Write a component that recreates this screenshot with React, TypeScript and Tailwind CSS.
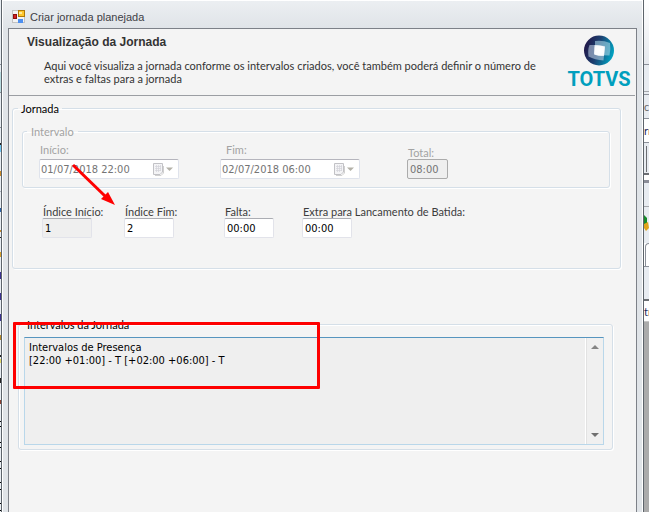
import React from 'react'

const fieldText = "font-['DejaVu_Sans_Condensed','Liberation_Sans',sans-serif] text-[11px] leading-[13px]"
const fieldset = 'min-w-0 rounded-[3px] border border-[#d5dfe8] shadow-[inset_1px_1px_0_#fff,1px_1px_0_#fff]'

// Fragments of the window behind that show past the left border: [top, height, colour]
const leftMarks: [number, number, string][] = [
  [64, 1, '#8b9099'],
  [72, 20, '#b9dce0'],
  [92, 1, '#8b9099'],
  [127, 1, '#8b9099'],
  [143, 2, '#222222'],
  [145, 7, '#6fc6f2'],
  [171, 5, '#c98a28'],
  [191, 1, '#aab0bb'],
  [208, 4, '#2a62a8'],
  [230, 2, '#c98a28'],
  [237, 1, '#222222'],
  [252, 5, '#d6a02c'],
  [272, 7, '#3b3191'],
  [293, 7, '#3b3191'],
  [314, 7, '#3b3191'],
  [335, 5, '#b58a2c'],
  [355, 2, '#222222'],
  [359, 4, '#e3d96a'],
  [378, 5, '#222222'],
  [400, 4, '#8a4030'],
  [421, 1, '#000000'],
  [426, 1, '#000000'],
  [442, 1, '#000000'],
  [447, 1, '#000000'],
  [461, 1, '#000000'],
  [468, 1, '#000000'],
  [482, 1, '#000000'],
  [489, 1, '#000000'],
  [503, 1, '#000000'],
  [510, 1, '#000000']
]

function AppIcon() {
  return (
    <svg width="14" height="14" viewBox="0 0 14 14" className="shrink-0" aria-hidden="true">
      <rect x="0.5" y="0.5" width="12" height="12" fill="#f3f3f3" stroke="#c2c2c2" />
      <rect x="6.5" y="0.5" width="6" height="6" fill="#ffc72c" stroke="#b07a08" />
      <rect x="7" y="2" width="3" height="2" fill="#ffe99a" />
      <rect x="1.5" y="4.5" width="3" height="4" fill="#d32020" stroke="#8c1010" />
      <rect x="6" y="9" width="5" height="4" fill="#4c8ff0" />
    </svg>
  )
}

function TotvsLogo() {
  return (
    <div className="flex w-[62px] shrink-0 flex-col items-center">
      <svg width="32" height="31" viewBox="0 0 32 31" aria-hidden="true">
        <defs>
          <linearGradient id="ball" x1="0" y1="0.3" x2="1" y2="0.6">
            <stop offset="0" stopColor="#211546" />
            <stop offset="0.45" stopColor="#1b3f70" />
            <stop offset="1" stopColor="#00a6c4" />
          </linearGradient>
          <radialGradient id="glow" cx="0.5" cy="0.5" r="0.8">
            <stop offset="0" stopColor="#fff" />
            <stop offset="0.6" stopColor="#fff" stopOpacity="0.95" />
            <stop offset="1" stopColor="#dcebf5" stopOpacity="0.7" />
          </radialGradient>
        </defs>
        <circle cx="16" cy="15.5" r="15" fill="url(#ball)" />
        <path d="M12 6Q20 5 27 8Q28 14 26.500 20.500L12 20Z" fill="#a9d3e4" fillOpacity="0.6" />
        <path d="M6.500 10Q14 9.500 22 11L20.500 25.500Q12 25 5.500 21.500Q4.500 15 6.500 10Z" fill="#b9c9de" fillOpacity="0.6" />
        <path d="M11.500 10Q17 10 22 11.500L21 21Q15 21 11 19.500Z" fill="url(#glow)" />
      </svg>
      <span className="font-[Roboto,sans-serif] text-[20px] leading-[26px] font-bold text-[#009fbe]">TOTVS</span>
    </div>
  )
}

function CalendarIcon() {
  return (
    <svg width="22" height="13" viewBox="0 0 22 13" className="shrink-0" aria-hidden="true">
      <path d="M1.5 0.5H10.5V9L8 11.5H1.5Z" fill="#f4f4f6" stroke="#c2c2c6" />
      <path d="M3 3.5H9M3 5.5H9M3 7.5H9M4.5 2V9M6.5 2V9M8.5 2V8" stroke="#d2d2da" strokeWidth="0.7" />
      <path d="M11.5 3V10L9 12.5H3" fill="none" stroke="#d0d0d0" />
      <path d="M14 4.5H21L17.5 8Z" fill="#b3b1a8" />
    </svg>
  )
}

function DateField({ id, label, value, indent }: { id: string; label: string; value: string; indent?: boolean }) {
  return (
    <div className="flex flex-col gap-[3px]">
      <label htmlFor={id} className={`text-[#a3a3a3] ${indent ? 'pl-[6px]' : 'pl-px'}`}>{label}</label>
      <div className="flex h-5 w-[140px] items-center rounded-[2px] border border-[#dfe3ec] border-t-[#b5b5bd] bg-white pr-1">
        <input id={id} disabled defaultValue={value} className={`${fieldText} min-w-0 flex-1 bg-transparent pl-px text-[#747474]`} />
        <CalendarIcon />
      </div>
    </div>
  )
}

function TextField({ id, label, value, readOnly }: { id: string; label: string; value: string; readOnly?: boolean }) {
  return (
    <div className="flex w-[50px] flex-col">
      <label htmlFor={id} className="pl-px whitespace-nowrap text-[#3c3c3c]">{label}</label>
      <input
        id={id}
        defaultValue={value}
        readOnly={readOnly}
        className={`${fieldText} h-5 w-full rounded-[2px] border border-[#e2e3ea] border-t-[#abadb3] px-[2px] text-black ${readOnly ? 'bg-[#efefef]' : 'bg-white'}`}
      />
    </div>
  )
}

// Slice of the window behind, right of the dialog
function BackgroundEdge() {
  return (
    <div className="flex w-[5px] shrink-0 flex-col overflow-hidden bg-[#ababab] text-[#1f2a5c]" aria-hidden="true">
      <div className="h-[65px] border-b border-[#8b9099] bg-gradient-to-b from-white to-[#e6e9ee]" />
      <div className="h-[27px] border-b border-[#a5a8ad] bg-[#e8ecf1]" />
      <div className="h-[3px] border-b border-[#8b9099] bg-[#e8ecf1]" />
      <div className="h-6 border-b border-[#8b9099] bg-[#e8ecf1] pt-[5px] text-[#6b6b6b]">co</div>
      <div className="h-6 border-b border-[#8b9099] bg-white pt-[5px]">rr</div>
      <div className="h-8 border-b-2 border-[#6b6e73] bg-[#e8ecf1] pt-[3px] pl-[2px]"><div className="h-[26px] w-px bg-[#6b6e73]" /></div>
      <div className="h-[8px] border-b-3 border-[#8b8d98] bg-white" />
      <div className="h-6 border-b border-[#a5a8ad] bg-[#e8ecf1]" />
      <div className="h-9 bg-[#e8ecf1] pt-[8px]">
        <svg width="5" height="16"><path d="M0 0L3 3V9H0Z" fill="#178a2b" /><path d="M0 9L4 7L5 13L2 16L0 13Z" fill="#e0a41c" /></svg>
      </div>
      <div className="h-[24px] border-b border-[#8b9099] bg-white pl-px"><div className="h-full rounded-tl-[4px] border-t border-l border-[#8b9099]" /></div>
      <div className="h-[34px] border-b-2 border-[#6b6e73] bg-[#e8ecf1]" />
      <div className="h-[21px] border-b border-[#c6c6c6] bg-white pt-[4px]">tr</div>
    </div>
  )
}

export default function App() {
  return (
    <div className="relative flex min-h-screen overflow-hidden bg-white font-[Lato,'Liberation_Sans',sans-serif] text-[11px] leading-[13px]">
      <div className="w-px shrink-0 bg-[#e8edf2]">
        <svg width="1" height="512" className="block" aria-hidden="true">
          {leftMarks.map(([top, height, color]) => (
            <rect key={top} x="0" y={top} width="1" height={height} fill={color} />
          ))}
        </svg>
      </div>

      <main className="flex min-w-0 flex-1 flex-col border-x border-[#5d646b] bg-gradient-to-b from-[#eceff2] from-0% to-[#e0e4e8] to-[28px] px-[6px] pt-px shadow-[inset_1px_1px_0_#fff,inset_-1px_0_0_#fff]">
        <header className="flex h-[27px] shrink-0 items-center gap-[4px] pt-[5px] pl-1 text-[#3f3f46]">
          <AppIcon />
          <h1 className="font-['Liberation_Sans',sans-serif]">Criar jornada planejada</h1>
        </header>

        <div className="flex flex-1 flex-col border border-b-0 border-[#7d8188] bg-[#f4f4f4]">
          <section className="mr-px flex h-[67px] items-start justify-between border-b border-[#9b9ea3] pr-[5px] pl-[18px]">
            <div className="pt-[6px]">
              <h2 className="font-['Liberation_Sans',sans-serif] text-[12px] leading-[14px] font-bold text-[#333]">Visualização da Jornada</h2>
              <p className="pt-[10px] pl-[17px] text-[#333]">
                Aqui você visualiza a jornada conforme os intervalos criados, você também poderá definir o número de
                <br />
                extras e faltas para a jornada
              </p>
            </div>
            <div className="pt-[6px]"><TotvsLogo /></div>
          </section>

          <fieldset className={`${fieldset} mt-[6px] mr-[15px] ml-[3px] px-[9px] pb-[30px]`}>
            <legend className="-ml-1 px-[3px] text-black">Jornada</legend>
            <fieldset className={`${fieldset} mt-[10px] mr-px px-4 pb-[8px]`}>
              <legend className="-ml-3 px-1 text-[#a3a3a3]">Intervalo</legend>
              <div className="flex items-end pt-[5px]">
                <DateField id="inicio" label="Início:" value="01/07/2018 22:00" />
                <div className="ml-[41px]"><DateField id="fim" label="Fim:" value="02/07/2018 06:00" indent /></div>
                <div className="ml-[47px] flex w-[41px] flex-col">
                  <label htmlFor="total" className="pl-px text-[#a3a3a3]">Total:</label>
                  <input id="total" disabled defaultValue="08:00" className={`${fieldText} h-5 w-full rounded-[2px] border border-[#ababab] bg-[#efefef] px-[2px] text-[#747474]`} />
                </div>
              </div>
            </fieldset>

            <div className="flex pt-[17px] pl-5">
              <TextField id="indice-inicio" label="Índice Início:" value="1" readOnly />
              <div className="ml-8"><TextField id="indice-fim" label="Índice Fim:" value="2" /></div>
              <div className="ml-[50px]"><TextField id="falta" label="Falta:" value="00:00" /></div>
              <div className="ml-7"><TextField id="extra" label="Extra para Lancamento de Batida:" value="00:00" /></div>
            </div>
          </fieldset>

          <div className="relative mt-[49px] mr-[23px] ml-[9px]">
            <fieldset className={`${fieldset} pr-2 pb-[4px] pl-[5px]`}>
              <legend className="px-[3px] text-black">Intervalos da Jornada</legend>
              <div className={`${fieldText} mt-[6px] flex h-[108px] border border-x-[#b9d7ea] border-t-[#5795bf] border-b-[#b9d7ea] bg-[#efefef]`}>
                <textarea
                  aria-label="Intervalos da Jornada"
                  readOnly
                  defaultValue={'Intervalos de Presença\n[22:00 +01:00] - T [+02:00 +06:00] - T'}
                  className="min-w-0 flex-1 resize-none overflow-hidden px-1 pt-[3px] text-black"
                />
                <div className="flex w-[17px] flex-col items-center justify-between border-l border-[#e2e2e2] bg-[#f0f0f0] py-[7px] shadow-[-1px_0_0_#fff]">
                  <svg width="8" height="4" aria-hidden="true"><path d="M0 4L4 0L8 4Z" fill="#858585" /></svg>
                  <svg width="8" height="4" aria-hidden="true"><path d="M0 0L4 4L8 0Z" fill="#707070" /></svg>
                </div>
              </div>
            </fieldset>
            {/* Highlight over the presence intervals */}
            <div className="pointer-events-none absolute top-[4px] -left-[5px] h-[67px] w-[307px] rounded-[1px] border-3 border-[#fe0000]" />
          </div>
        </div>
      </main>

      <svg className="pointer-events-none absolute top-[160px] left-[68px]" width="52" height="50" viewBox="68 160 52 50" aria-hidden="true">
        <path d="M73 165L106 197" stroke="#fe0000" strokeWidth="3" />
        <path d="M115 205L101 199L108 192Z" fill="#fe0000" />
      </svg>

      <BackgroundEdge />
    </div>
  )
}
